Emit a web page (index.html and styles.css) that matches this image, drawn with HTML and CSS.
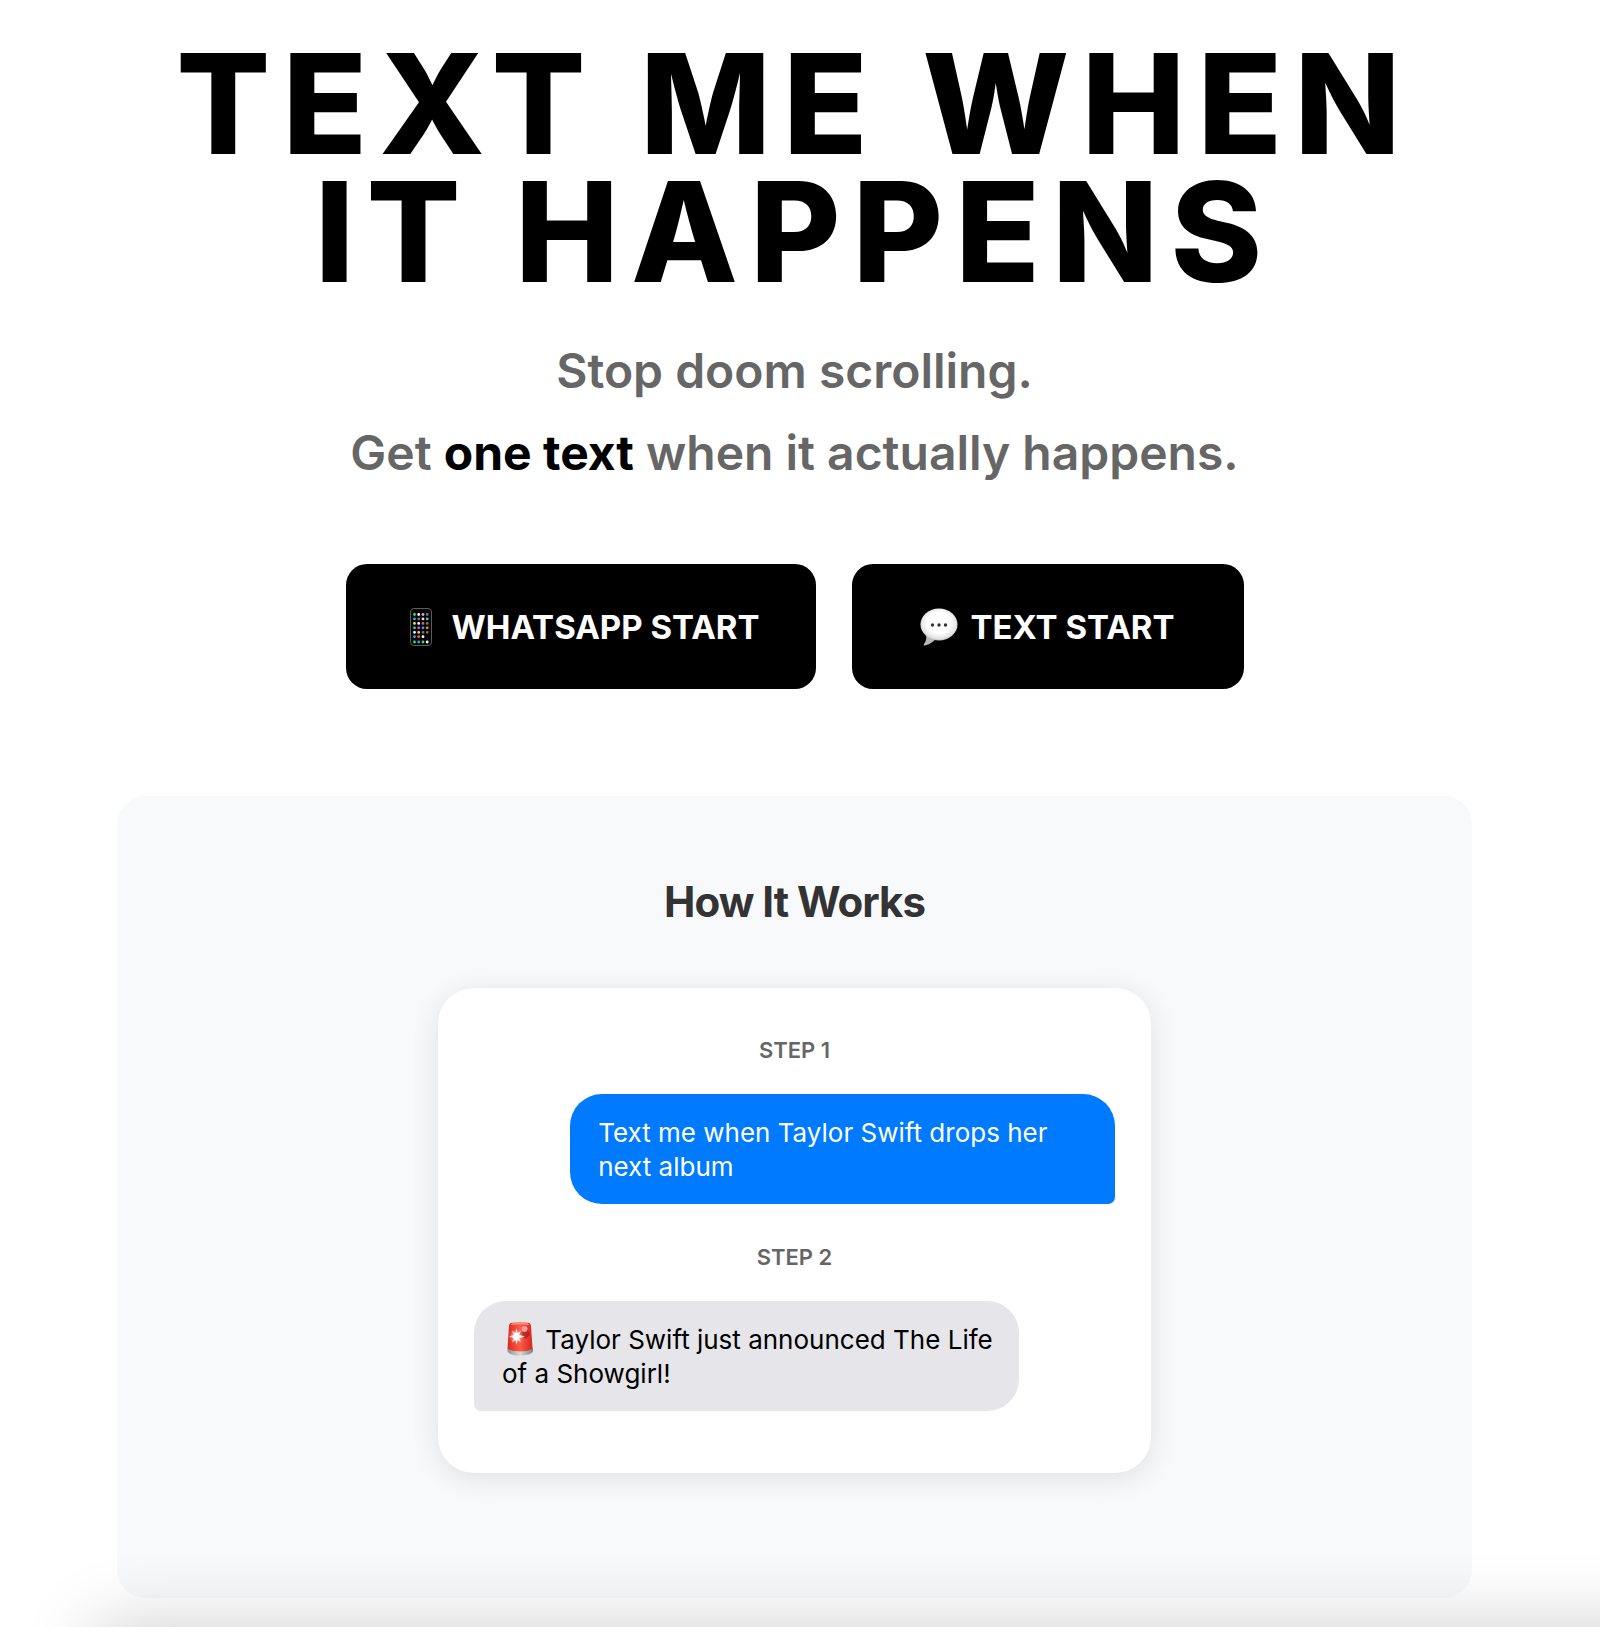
FILE: index.html
```html
<!DOCTYPE html>
<html lang="en">
<head>
<meta charset="utf-8">
<meta name="viewport" content="width=device-width, initial-scale=1">
<title>Text Me When It Happens</title>
<link rel="stylesheet" href="styles.css">
</head>
<body>
<main class="page">
  <header class="hero">
    <h1 class="hero-title">TEXT ME WHEN<br>IT HAPPENS</h1>
    <p class="hero-text">Stop doom scrolling.<br>Get <strong>one text</strong> when it actually happens.</p>
    <div class="actions">
      <button class="button" type="button">
        <svg class="button-icon" viewBox="0 0 38 38" aria-hidden="true">
          <rect x="8.5" y=".5" width="21" height="37" rx="3.5" fill="#050505" stroke="#5c5c5c"/>
          <g stroke-width="2.8" stroke-linecap="round">
            <path stroke="#4cd964" d="M12.5 6.5h.01M12.5 34h.01M21 34h.01"/>
            <path stroke="#fff" d="M16.7 6.5h.01M16.7 15.4h.01M12.5 24.3h.01M21 28.7h.01M25.2 34h.01"/>
            <path stroke="#d9a0e8" d="M21 6.5h.01"/>
            <path stroke="#777" d="M25.2 6.5h.01M16.7 10.9h.01M25.2 15.4h.01M21 24.3h.01M25.2 24.3h.01"/>
            <path stroke="#1badf8" d="M12.5 10.9h.01M21 19.8h.01M12.5 28.7h.01M16.7 34h.01"/>
            <path stroke="#f4d9b0" d="M21 10.9h.01"/>
            <path stroke="#35c3e8" d="M25.2 10.9h.01M12.5 19.8h.01"/>
            <path stroke="#ffdf3d" d="M12.5 15.4h.01M16.7 24.3h.01"/>
            <path stroke="#ff5a50" d="M21 15.4h.01M16.7 28.7h.01"/>
            <path stroke="#e040fb" d="M16.7 19.8h.01"/>
            <path stroke="#ff8a00" d="M25.2 19.8h.01"/>
          </g>
        </svg>
        <span>WHATSAPP START</span>
      </button>
      <button class="button" type="button">
        <svg class="button-icon" viewBox="0 0 38 38" aria-hidden="true">
          <defs>
            <radialGradient id="balloon" cx=".5" cy=".45" r=".58">
              <stop offset=".55" stop-color="#fff"/>
              <stop offset=".85" stop-color="#e2e2e2"/>
              <stop offset="1" stop-color="#a8a8a8"/>
            </radialGradient>
          </defs>
          <path fill="#b9b9b9" d="M6 27c1 4-.5 7-2.200 9.500-.4.800.2 1.200 1 1 5-1 8-3.500 10.500-6z"/>
          <ellipse cx="19" cy="16.500" rx="18.500" ry="16" fill="url(#balloon)"/>
          <g fill="#333"><circle cx="12.500" cy="17" r="1.700"/><circle cx="19" cy="17" r="1.700"/><circle cx="25.500" cy="17" r="1.700"/></g>
        </svg>
        <span>TEXT START</span>
      </button>
    </div>
  </header>

  <section class="how" aria-labelledby="how-title">
    <h2 class="how-title" id="how-title">How It Works</h2>
    <div class="chat">
      <h3 class="step">STEP 1</h3>
      <p class="bubble bubble-sent">Text me when Taylor Swift drops her next album</p>
      <h3 class="step">STEP 2</h3>
      <p class="bubble bubble-received"><svg class="siren" viewBox="0 0 36 34" role="img" aria-label="Siren">
          <defs>
            <linearGradient id="lamp" x2="1" y2="0">
              <stop offset="0" stop-color="#d92a20"/>
              <stop offset=".5" stop-color="#ff5b48"/>
              <stop offset="1" stop-color="#d3271d"/>
            </linearGradient>
            <linearGradient id="base" x2="1" y2="0">
              <stop offset="0" stop-color="#8b8f90"/>
              <stop offset=".5" stop-color="#d8dada"/>
              <stop offset="1" stop-color="#7d8182"/>
            </linearGradient>
            <radialGradient id="glow">
              <stop offset="0" stop-color="#fff"/>
              <stop offset=".35" stop-color="#ffd5cc" stop-opacity=".8"/>
              <stop offset="1" stop-color="#ff6a58" stop-opacity="0"/>
            </radialGradient>
          </defs>
          <path fill="url(#base)" d="M5.500 26h25.500v3c-1 6-24.500 6-25.500 0z"/>
          <path fill="url(#lamp)" d="M7 4c.2-2 1-3 3-3.200q8-1 16 0c2 .2 2.800 1.200 3 3.200l1.500 22c-1.500 4.500-23.500 4.500-25 0z"/>
          <path fill="#ff9d8e" d="M10 1.500q8-1.200 16 0l1 1.500q-9-1.500-18 0z"/>
          <path fill="#a91a15" d="M17 12l8-5 3 5-4 5z" opacity=".7"/>
          <circle cx="22.500" cy="7" r="3" fill="#ffb7ac" opacity=".8"/>
          <circle cx="14.500" cy="14.500" r="8" fill="url(#glow)"/>
          <path fill="#fff" d="M14.500 6l1 5.500 3.500-3-2 4.500 6 1.500-6 1.500 2 4.500-3.500-3-1 5.500-1-5.500-3.500 3 2-4.500-5-1.500 5-1.500-2-4.500 3.500 3z"/>
        </svg> Taylor Swift just announced The Life of a Showgirl!</p>
    </div>
  </section>
</main>
</body>
</html>
```
FILE: styles.css
```css
* {
  box-sizing: border-box;
}

body {
  margin: 0;
  overflow-x: hidden;
  background: #fff;
  color: #000;
  font-family: Inter, "Liberation Sans", sans-serif;
}

h1, h2, h3, p {
  margin: 0;
}

.page {
  padding: 40px 128px 29px 117px;
}

/* Soft shade rising from the lower edge of the window */
.page::after {
  content: "";
  position: fixed;
  top: 100%;
  left: 95px;
  right: -120px;
  height: 200px;
  box-shadow: 0 0 75px rgba(0, 0, 0, 0.2);
  pointer-events: none;
}

.hero {
  display: flex;
  flex-direction: column;
  align-items: center;
  text-align: center;
}

.hero-title {
  font-size: 139px;
  font-weight: 800;
  line-height: 128px;
  letter-spacing: 12px;
}

.hero-text {
  margin-top: 34px;
  color: #666;
  font-size: 48px;
  font-weight: 600;
  line-height: 82px;
}

.hero-text strong {
  color: #000;
  font-weight: 700;
}

.actions {
  display: flex;
  flex-wrap: wrap;
  justify-content: center;
  gap: 36px;
  margin-top: 70px;
}

.button {
  display: flex;
  align-items: center;
  justify-content: center;
  gap: 12px;
  min-width: 392px;
  height: 125px;
  padding: 0 56px;
  border: 0;
  border-radius: 21px;
  background: #000;
  color: #fff;
  font-family: inherit;
  font-size: 33px;
  font-weight: 700;
}

.button-icon {
  width: 38px;
  height: 38px;
}

.how {
  margin-top: 107px;
  padding: 80px 0 125px;
  border-radius: 28px;
  background: #f8f9fb;
}

.how-title {
  color: #333;
  font-size: 42px;
  font-weight: 700;
  line-height: 52px;
  letter-spacing: -1px;
  text-align: center;
}

.chat {
  display: flex;
  flex-direction: column;
  max-width: 713px;
  margin: 60px auto 0;
  padding: 48px 36px 62px;
  border-radius: 36px;
  background: #fff;
  box-shadow: 0 5px 28px rgba(0, 0, 0, 0.1);
}

.step {
  color: #666;
  font-size: 22px;
  font-weight: 600;
  line-height: 28px;
  text-align: center;
}

.bubble {
  width: 85%;
  margin-top: 30px;
  padding: 22px 16px 20px 28px;
  border-radius: 32px;
  font-size: 26px;
  line-height: 34px;
}

.bubble-sent {
  align-self: flex-end;
  margin-bottom: 39px;
  border-bottom-right-radius: 7px;
  background: #007aff;
  color: #fff;
}

.bubble-received {
  align-self: flex-start;
  border-bottom-left-radius: 7px;
  background: #e5e5ea;
}

.siren {
  width: 36px;
  height: 34px;
  margin: -4px 0;
  vertical-align: -3px;
}
```
